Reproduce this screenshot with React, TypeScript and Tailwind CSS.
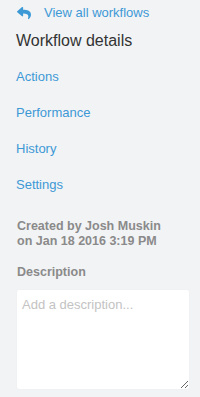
import { FaReply } from "react-icons/fa";

const links = ["Actions", "Performance", "History", "Settings"];

export default function App() {
  return (
    <div
      className="w-[200px] h-[397px] bg-[#f2f3f5] overflow-hidden"
      style={{ fontFamily: '"Liberation Sans", Arial, sans-serif' }}
    >
      {/* back link */}
      <div className="flex items-center pt-[3px] h-[23px] text-[13px] leading-[20px] text-[#3d99d6]">
        <FaReply className="ml-[17px] w-[14px] h-[14px]" />
        <span className="ml-[13px]">View all workflows</span>
      </div>

      <h2 className="mt-[6px] ml-[16px] text-[16px] leading-[24px] text-[#333]">
        Workflow details
      </h2>

      <nav className="mt-[6px] flex flex-col">
        {links.map((l) => (
          <a key={l} className="pl-[16px] h-[36px] text-[13px] leading-[36px] text-[#3d99d6]">
            {l}
          </a>
        ))}
      </nav>

      <p className="mt-[16px] ml-[17px] text-[12.5px] leading-[15px] font-bold text-[#8a8a8a]">
        Created by Josh Muskin
        <br />
        on Jan 18 2016 3:19 PM
      </p>

      <p className="mt-[16px] ml-[17px] text-[12.5px] leading-[15px] font-bold text-[#8a8a8a]">
        Description
      </p>

      <textarea
        placeholder="Add a description..."
        className="block mt-[9px] ml-[16px] w-[174px] h-[101px] rounded-[3px] bg-white border border-[#f0f1f3] px-[5px] pt-[7px] text-[13px] leading-[16px] text-[#333] placeholder:text-[#c3c3c3] outline-none"
      />
    </div>
  );
}
